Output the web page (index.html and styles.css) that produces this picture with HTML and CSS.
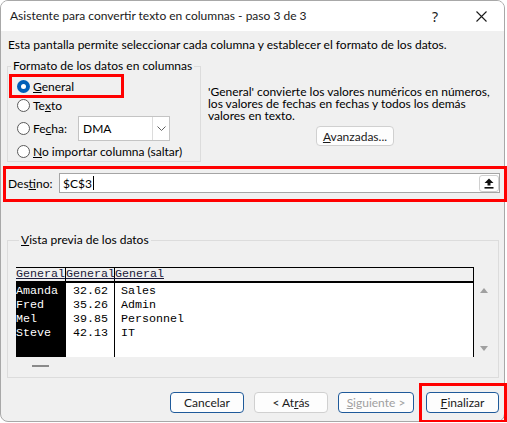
FILE: index.html
```html
<!DOCTYPE html>
<html lang="es">
<head>
<meta charset="utf-8">
<title>Asistente para convertir texto en columnas</title>
<link rel="stylesheet" href="styles.css">
</head>
<body>
<div class="window">
  <div class="titlebar">
    <span class="title">Asistente para convertir texto en columnas - paso 3 de 3</span>
    <span class="tb-btn help">?</span>
    <span class="tb-btn close">
      <svg width="11" height="11" viewBox="0 0 11 11"><path d="M0.5 0.5L10.5 10.5M10.5 0.5L0.5 10.5" stroke="#1a1a1a" stroke-width="1.1" fill="none"/></svg>
    </span>
  </div>
  <div class="content">
    <p class="intro">Esta pantalla permite seleccionar cada columna y establecer el formato de los datos.</p>
    <div class="top-row">
      <fieldset class="group format">
        <legend>Formato de los datos en columnas</legend>
        <div class="opt opt-general"><span class="radio checked"></span><span><u>G</u>eneral</span></div>
        <div class="opt opt-texto"><span class="radio"></span><span>Te<u>x</u>to</span></div>
        <div class="opt opt-fecha">
          <span class="radio"></span><span class="fecha-label">Fe<u>c</u>ha:</span>
          <div class="combo">
            <span class="combo-value">DMA</span>
            <span class="combo-btn"><svg width="9" height="5" viewBox="0 0 9 5"><path d="M0.5 0.5L4.5 4.5L8.5 0.5" stroke="#606060" stroke-width="1" fill="none"/></svg></span>
          </div>
        </div>
        <div class="opt opt-skip"><span class="radio"></span><span><u>N</u>o importar columna (saltar)</span></div>
      </fieldset>
      <div class="info">
        <p class="info-text">'General' convierte los valores numéricos en números,<br>los valores de fechas en fechas y todos los demás<br>valores en texto.</p>
        <button class="btn btn-adv"><u>A</u>vanzadas...</button>
      </div>
    </div>
    <div class="dest">
      <span class="dest-label">Des<u>t</u>ino:</span>
      <div class="dest-input">
        <span class="dest-value">$C$3</span><span class="caret"></span>
        <span class="pick"><svg width="10" height="11" viewBox="0 0 10 11"><path d="M5 0.5L9.5 5H6.5V7.5H3.5V5H0.5Z" fill="#111"/><rect x="0.5" y="9" width="9" height="1.6" fill="#111"/></svg></span>
      </div>
    </div>
    <fieldset class="group preview">
      <legend><u>V</u>ista previa de los datos</legend>
      <div class="preview-body">
        <div class="grid-wrap">
          <div class="grid">
            <div class="col c1">
              <div class="head">General</div>
              <div class="cells">Amanda<br>Fred<br>Mel<br>Steve</div>
            </div>
            <div class="col c2">
              <div class="head">General</div>
              <div class="cells">32.62<br>35.26<br>39.85<br>42.13</div>
            </div>
            <div class="col c3">
              <div class="head">General</div>
              <div class="cells">Sales<br>Admin<br>Personnel<br>IT</div>
            </div>
          </div>
          <div class="hscroll"><span class="thumb"></span></div>
        </div>
        <div class="vscroll"><span class="arrow up"></span><span class="arrow down"></span></div>
      </div>
    </fieldset>
    <div class="footer">
      <button class="btn btn-nav btn-blue w74">Cancelar</button>
      <button class="btn btn-nav w74">&lt; At<u>r</u>ás</button>
      <button class="btn btn-nav btn-blue btn-disabled w76"><u>S</u>iguiente &gt;</button>
      <div class="final-box"><button class="btn btn-nav btn-blue btn-final"><u>F</u>inalizar</button></div>
    </div>
  </div>
</div>
</body>
</html>
```
FILE: styles.css
```css
html, body {
  margin: 0;
  background: #ffffff;
  overflow: hidden;
}
body {
  font-family: Lato, "Noto Sans", sans-serif;
  font-size: 12px;
  color: #000;
}
.window {
  width: 505px;
  height: 422px;
  box-sizing: border-box;
  border: 1px solid #a8a8a8;
  border-radius: 8px;
  background: #f0f0f0;
}
.titlebar {
  display: flex;
  align-items: center;
  height: 30px;
  background: #fff;
  border-radius: 7px 7px 0 0;
}
.title {
  flex: 1;
  padding-left: 9px;
  line-height: 16px;
  color: #1a1a1a;
  white-space: nowrap;
}
.tb-btn {
  width: 46px;
  height: 30px;
  display: flex;
  align-items: center;
  justify-content: center;
}
.help {
  font-family: "Noto Sans", sans-serif;
  font-size: 14px;
  color: #1a1a1a;
}
.content {
  padding: 0 5px 0 6px;
}
.intro {
  margin: 6px 0 0 1px;
  line-height: 16px;
  white-space: nowrap;
}
.top-row {
  display: flex;
  align-items: flex-start;
  margin-top: 5px;
}
fieldset.group {
  margin: 0;
  padding: 0;
  border: 1px solid #dcdcdc;
  min-width: 0;
  box-sizing: border-box;
}
legend {
  padding: 0 2px;
  margin-left: 3px;
  line-height: 16px;
  white-space: nowrap;
}
.format {
  width: 194px;
  flex: none;
}
.opt {
  display: flex;
  align-items: center;
  padding-left: 9px;
  white-space: nowrap;
}
.opt-general {
  margin: 3px 0 0 4px;
  width: 109px;
  height: 18px;
  padding-left: 5px;
  box-sizing: border-box;
  outline: 3px solid #ff0000;
}
.opt-texto { height: 21px; }
.opt-fecha { height: 25px; }
.opt-skip { height: 20px; }
.radio {
  width: 13px;
  height: 13px;
  box-sizing: border-box;
  border: 1px solid #5a5a5a;
  border-radius: 50%;
  background: #fff;
  margin-right: 3px;
  flex: none;
}
.radio.checked {
  border: none;
  background: #005fb8;
  display: flex;
  align-items: center;
  justify-content: center;
}
.radio.checked::after {
  content: "";
  width: 5px;
  height: 5px;
  border-radius: 50%;
  background: #fff;
}
.fecha-label {
  width: 45px;
}
.combo {
  display: flex;
  width: 92px;
  height: 25px;
  box-sizing: border-box;
  border: 1px solid #c4c4c4;
  background: #fff;
}
.combo-value {
  flex: 1;
  padding-left: 4px;
  line-height: 23px;
}
.combo-btn {
  width: 17px;
  box-sizing: border-box;
  border-left: 1px solid #dcdcdc;
  display: flex;
  align-items: center;
  justify-content: center;
}
.info {
  margin-left: 7px;
  padding-top: 28px;
  display: flex;
  flex-direction: column;
  align-items: flex-start;
}
.info-text {
  margin: 0;
  line-height: 12px;
  white-space: nowrap;
}
.btn {
  font: inherit;
  font-size: 12px;
  background: #fdfdfd;
  border: 1px solid #d0d0d0;
  border-radius: 4px;
  padding: 0;
  color: #1a1a1a;
  box-sizing: border-box;
  white-space: nowrap;
}
.btn-adv {
  margin: 4px 0 0 108px;
  width: 78px;
  height: 20px;
}
.dest {
  display: flex;
  align-items: center;
  margin: 4px -8px 0 -4px;
  border: 3px solid #ff0000;
  padding: 4px 4px 6px 2px;
}
.dest-label {
  width: 51px;
  flex: none;
}
.dest-input {
  flex: 1;
  height: 20px;
  box-sizing: border-box;
  border: 1px solid #a5a5a5;
  background: #fff;
  display: flex;
  align-items: center;
  padding-left: 3px;
}
.caret {
  width: 1px;
  height: 14px;
  background: #000;
  margin-left: 1px;
}
.pick {
  margin-left: auto;
  width: 20px;
  height: 17px;
  box-sizing: border-box;
  border: 1px solid #d0d0d0;
  border-radius: 3px;
  background: #fff;
  display: flex;
  align-items: center;
  justify-content: center;
}
fieldset.preview {
  margin-top: 30px;
  padding: 19px 4px 5px 8px;
}
.preview-body {
  display: flex;
}
.grid-wrap {
  flex: 1;
}
.grid {
  display: flex;
  height: 90px;
  font-family: "Liberation Mono", "Courier New", monospace;
  font-size: 11.67px;
}
.col {
  display: flex;
  flex-direction: column;
  border-right: 1px solid #000;
  box-sizing: border-box;
}
.c1 { width: 50px; }
.c2 { width: 49px; }
.c3 { flex: 1; }
.head {
  height: 16px;
  box-sizing: border-box;
  border-top: 1px solid #000;
  border-bottom: 2px solid #000;
  background: #f0f0f0;
  line-height: 13px;
  text-decoration: underline;
  color: #1a1a3a;
  white-space: nowrap;
}
.cells {
  flex: 1;
  background: #fff;
  padding-top: 1px;
  line-height: 14px;
  white-space: nowrap;
}
.c1 .cells {
  background: #000;
  color: #fff;
}
.c2 .cells { padding-left: 7px; }
.c3 .cells { padding-left: 6px; }
.hscroll {
  height: 15px;
  display: flex;
}
.thumb {
  margin: 8px 0 0 16px;
  width: 17px;
  height: 2px;
  background: #8a8a8a;
}
.vscroll {
  width: 20px;
  display: flex;
  flex-direction: column;
  align-items: center;
}
.arrow {
  width: 0;
  height: 0;
  border-left: 4px solid transparent;
  border-right: 4px solid transparent;
}
.arrow.up {
  margin-top: 21px;
  border-bottom: 5px solid #a0a0a0;
}
.arrow.down {
  margin-top: 53px;
  border-top: 5px solid #a0a0a0;
}
.footer {
  display: flex;
  justify-content: flex-end;
  align-items: flex-start;
  gap: 10px;
  margin: 5px -8px 0 0;
}
.btn-nav {
  height: 21px;
  margin-top: 9px;
}
.w74 { width: 74px; }
.w76 { width: 76px; }
.btn-blue {
  border-color: #1f5a9a;
}
.btn-disabled {
  color: #a0a0a0;
}
.final-box {
  margin-left: -5px;
  height: 40px;
  box-sizing: border-box;
  border: 3px solid #ff0000;
  padding: 6px 5px 0 4px;
}
.btn-final {
  width: 73px;
  margin-top: 0;
}
```
